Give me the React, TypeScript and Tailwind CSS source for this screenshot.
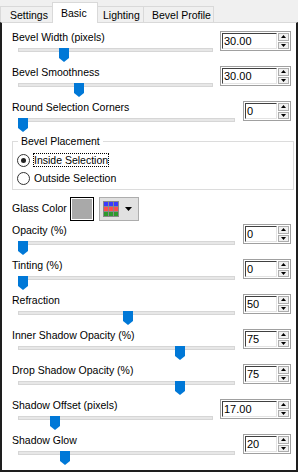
import React from 'react';

type Row = {
  label: string;
  value: string;
  wide: boolean;
  thumb: string;
};

const topRows: Row[] = [
  { label: 'Bevel Width (pixels)', value: '30.00', wide: true, thumb: 'left-[41px]' },
  { label: 'Bevel Smoothness', value: '30.00', wide: true, thumb: 'left-[56px]' },
  { label: 'Round Selection Corners', value: '0', wide: false, thumb: 'left-[0px]' },
];

const bottomRows: Row[] = [
  { label: 'Opacity (%)', value: '0', wide: false, thumb: 'left-[0px]' },
  { label: 'Tinting (%)', value: '0', wide: false, thumb: 'left-[0px]' },
  { label: 'Refraction', value: '50', wide: false, thumb: 'left-[105px]' },
  { label: 'Inner Shadow Opacity (%)', value: '75', wide: false, thumb: 'left-[157px]' },
  { label: 'Drop Shadow Opacity (%)', value: '75', wide: false, thumb: 'left-[157px]' },
  { label: 'Shadow Offset (pixels)', value: '17.00', wide: true, thumb: 'left-[32px]' },
  { label: 'Shadow Glow', value: '20', wide: false, thumb: 'left-[42px]' },
];

const Arrow = ({ up }: { up?: boolean }) => (
  <svg width="5" height="3" viewBox="0 0 5 3">
    <path d={up ? 'M0 3 L2.5 0 L5 3 Z' : 'M0 0 L5 0 L2.5 3 Z'} fill="#000" />
  </svg>
);

const Spin = ({ value, wide }: { value: string; wide: boolean }) => (
  <div className={`mt-px flex h-[20px] gap-px border border-[#a0a0a0] bg-white p-px ${wide ? 'w-[71px]' : 'w-[48px]'}`}>
    <div className="flex-1 border-t border-l border-[#404040] border-r border-b border-r-[#e3e3e3] border-b-[#e3e3e3] pl-px text-[11px] leading-[14px]">
      {value}
    </div>
    <div className="flex w-[11px] flex-col gap-px">
      <div className="flex flex-1 items-center justify-center border border-[#adadad] bg-[#f0f0f0]">
        <Arrow up />
      </div>
      <div className="flex flex-1 items-center justify-center border border-[#adadad] bg-[#f0f0f0]">
        <Arrow />
      </div>
    </div>
  </div>
);

const Thumb = () => (
  <svg width="10" height="14" viewBox="0 0 10 14">
    <path d="M0 0 H10 V10 L5 14 L0 10 Z" fill="#0078d7" />
  </svg>
);

const SliderRow = ({ row }: { row: Row }) => (
  <div className="flex h-[35px] items-start">
    <div className={row.wide ? 'w-[201px]' : 'w-[223px]'}>
      <div className="h-[14px] leading-[14px]">{row.label}</div>
      <div className="relative ml-[6px] mt-[2px] h-[14px]">
        <div className="mt-[4px] h-[4px] border border-[#d6d6d6] bg-[#e7e7e7]" />
        <div className={`absolute top-0 ${row.thumb}`}>
          <Thumb />
        </div>
      </div>
    </div>
    <div className="ml-auto">
      <Spin value={row.value} wide={row.wide} />
    </div>
  </div>
);

const Radio = ({ label, checked }: { label: string; checked?: boolean }) => (
  <div className="flex h-[18px] items-center">
    <div className="flex h-[13px] w-[13px] items-center justify-center rounded-full border border-[#333] bg-white">
      {checked && <div className="h-[5px] w-[5px] rounded-full bg-[#222]" />}
    </div>
    <span className={`ml-[3px] px-px leading-[14px] ${checked ? 'outline outline-1 outline-dotted outline-black -outline-offset-1' : ''}`}>
      {label}
    </span>
  </div>
);

const ColorGrid = () => (
  <svg width="16" height="16" viewBox="0 0 16 16">
    <rect width="16" height="16" fill="#8a8a8a" />
    {[1, 6, 11].map(x => (
      <React.Fragment key={x}>
        <rect x={x} y={1} width="4" height="4" fill="#3b3bff" />
        <rect x={x} y={6} width="4" height="4" fill="#ff4d4d" />
        <rect x={x} y={11} width="4" height="4" fill="#2e9a2e" />
      </React.Fragment>
    ))}
  </svg>
);

const tabs = [
  { name: 'Settings', cls: 'w-[52px] pl-[9px] border-l' },
  { name: 'Lighting', cls: 'w-[46px] pl-[5px] border-r' },
  { name: 'Bevel Profile', cls: 'w-[70px] pl-[8px] border-r' },
];

export default function App() {
  return (
    <div className="h-[472px] w-[298px] bg-[#f0f0f0] font-['Liberation_Sans',Arial,sans-serif] text-[10.5px] text-black">
      <div className="flex h-[22px] items-end">
        <div className={`h-[16px] border-t border-[#d9d9d9] pt-px leading-[14px] ${tabs[0].cls}`}>{tabs[0].name}</div>
        <div className="relative z-10 -mb-px h-[21px] w-[46px] border-x border-t border-[#d9d9d9] bg-white pl-[8px] pt-[3px] leading-[14px]">
          Basic
        </div>
        {tabs.slice(1).map(t => (
          <div key={t.name} className={`h-[16px] border-t border-[#d9d9d9] pt-px leading-[14px] ${t.cls}`}>
            {t.name}
          </div>
        ))}
      </div>

      <div className="h-[450px] border-x-2 border-b-2 border-[#1e1e1e] border-t border-t-[#d9d9d9] bg-white pl-[10px] pr-[5px] pt-[7px]">
        {topRows.map(r => (
          <SliderRow key={r.label} row={r} />
        ))}

        <fieldset className="-mr-[3px] border border-[#dcdcdc] px-[4px] pb-[2px]">
          <legend className="ml-px px-[3px] leading-[13px]">Bevel Placement</legend>
          <div className="pt-[3px]">
            <Radio label="Inside Selection" checked />
            <Radio label="Outside Selection" />
          </div>
        </fieldset>

        <div className="mt-[7px] flex h-[24px] items-center">
          <div className="w-[58px]">Glass Color</div>
          <div className="h-[24px] w-[24px] border border-black bg-white p-px">
            <div className="h-full w-full bg-[#a9a9a9]" />
          </div>
          <div className="ml-[5px] flex h-[24px] w-[40px] items-center border border-[#adadad] bg-[#e1e1e1] pl-[3px]">
            <ColorGrid />
            <svg className="ml-[6px]" width="7" height="4" viewBox="0 0 7 4">
              <path d="M0 0 H7 L3.5 4 Z" fill="#000" />
            </svg>
          </div>
        </div>

        <div className="mt-[2px]">
          {bottomRows.map(r => (
            <SliderRow key={r.label} row={r} />
          ))}
        </div>
      </div>
    </div>
  );
}
